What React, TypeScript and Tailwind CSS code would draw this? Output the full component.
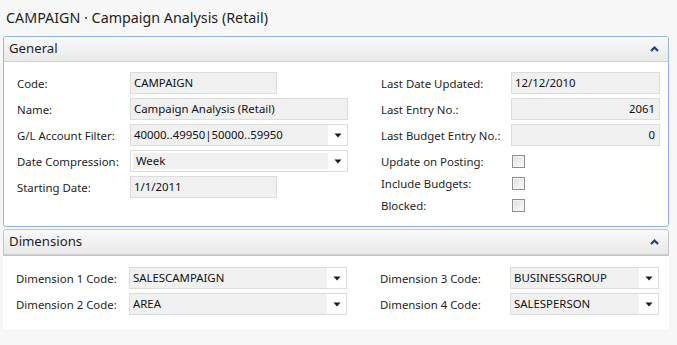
import React from 'react';

const ChevronUp = () => (
  <svg width="9" height="6" viewBox="0 0 9 6" className="block">
    <path d="M1 5 L4.5 1.5 L8 5" fill="none" stroke="#1f3f8f" strokeWidth="2.2" />
  </svg>
);

const ArrowDown = () => (
  <svg width="8" height="5" viewBox="0 0 8 5" className="block">
    <path d="M0.5 0.5 H7.5 L4 4.5 Z" fill="#1a1a1a" />
  </svg>
);

const TextBox = ({ value, width, right }: { value: string; width: string; right?: boolean }) => (
  <div
    className={`h-[22px] ${width} border border-[#dcdcdc] bg-[#f0f0f0] flex items-center px-[3px] ${
      right ? 'justify-end pr-[4px]' : ''
    }`}
  >
    <span className="text-[11.4px] text-[#111] leading-none">{value}</span>
  </div>
);

const DropBox = ({ value, width, inset }: { value: string; width: string; inset?: boolean }) => (
  <div className={`h-[22px] ${width} border border-[#dcdcdc] bg-white flex`}>
    <div className={`flex-1 flex items-center px-[3px] bg-[#f0f0f0] ${inset ? 'my-[2px] ml-[2px]' : ''}`}>
      <span className="text-[11.4px] text-[#111] leading-none">{value}</span>
    </div>
    <div className="w-[19px] flex items-center justify-center">
      <ArrowDown />
    </div>
  </div>
);

const CheckBox = () => (
  <div className="w-[13px] h-[13px] border border-[#8f8f8f] bg-[#f3f3f3] p-[1px]">
    <div className="w-full h-full bg-gradient-to-br from-[#e2e2e2] to-[#f8f8f8]" />
  </div>
);

const Row = ({ label, labelW, children }: { label: string; labelW: string; children: React.ReactNode }) => (
  <div className="flex items-center h-[22px]">
    <div className={`${labelW} text-[11.4px] text-[#1e1e1e] leading-none pt-[1px]`}>{label}</div>
    {children}
  </div>
);

const PanelHeader = ({ title }: { title: string }) => (
  <div className="h-[25px] flex items-center justify-between pl-[5px] pr-[9px] bg-gradient-to-b from-[#f9f9f9] to-[#e9e9e9] border-b border-[#d0d0d0]">
    <span className="text-[13.2px] text-[#1e1e1e]">{title}</span>
    <ChevronUp />
  </div>
);

export default function App() {
  return (
    <div
      className="w-[677px] h-[345px] bg-[#f7f7f7] overflow-hidden"
      style={{ fontFamily: '"Noto Sans", "Open Sans", sans-serif' }}
    >
      <div className="h-[36px] pl-[6px] flex items-center pb-[1px]">
        <span className="text-[14.3px] text-[#1e1e1e]">CAMPAIGN · Campaign Analysis (Retail)</span>
      </div>

      {/* General */}
      <div className="ml-[3px] w-[666px] h-[191px] border border-[#93b5ee] rounded-[3px] bg-white overflow-hidden">
        <PanelHeader title="General" />
        <div className="flex pt-[10px] pl-[13px]">
          <div className="w-[364px] flex flex-col gap-[4px]">
            <Row label="Code:" labelW="w-[113px]">
              <TextBox value="CAMPAIGN" width="w-[147px]" />
            </Row>
            <Row label="Name:" labelW="w-[113px]">
              <TextBox value="Campaign Analysis (Retail)" width="w-[218px]" />
            </Row>
            <Row label="G/L Account Filter:" labelW="w-[113px]">
              <DropBox value="40000..49950|50000..59950" width="w-[218px]" />
            </Row>
            <Row label="Date Compression:" labelW="w-[113px]">
              <DropBox value="Week" width="w-[218px]" inset />
            </Row>
            <Row label="Starting Date:" labelW="w-[113px]">
              <TextBox value="1/1/2011" width="w-[147px]" />
            </Row>
          </div>
          <div className="flex flex-col gap-[4px]">
            <Row label="Last Date Updated:" labelW="w-[130px]">
              <TextBox value="12/12/2010" width="w-[149px]" />
            </Row>
            <Row label="Last Entry No.:" labelW="w-[130px]">
              <TextBox value="2061" width="w-[149px]" right />
            </Row>
            <Row label="Last Budget Entry No.:" labelW="w-[130px]">
              <TextBox value="0" width="w-[149px]" right />
            </Row>
            <div className="flex flex-col">
              <Row label="Update on Posting:" labelW="w-[131px]">
                <CheckBox />
              </Row>
              <Row label="Include Budgets:" labelW="w-[131px]">
                <CheckBox />
              </Row>
              <Row label="Blocked:" labelW="w-[131px]">
                <CheckBox />
              </Row>
            </div>
          </div>
        </div>
      </div>

      {/* Dimensions */}
      <div className="ml-[3px] mt-[2px] w-[666px]">
        <div className="border border-[#c4c4c4] rounded-t-[3px] overflow-hidden">
          <PanelHeader title="Dimensions" />
        </div>
        <div className="bg-white h-[73px] flex pt-[11px] pl-[13px]">
          <div className="w-[364px] flex flex-col gap-[4px]">
            <Row label="Dimension 1 Code:" labelW="w-[113px]">
              <DropBox value="SALESCAMPAIGN" width="w-[218px]" />
            </Row>
            <Row label="Dimension 2 Code:" labelW="w-[113px]">
              <DropBox value="AREA" width="w-[218px]" />
            </Row>
          </div>
          <div className="flex flex-col gap-[4px]">
            <Row label="Dimension 3 Code:" labelW="w-[130px]">
              <DropBox value="BUSINESSGROUP" width="w-[149px]" />
            </Row>
            <Row label="Dimension 4 Code:" labelW="w-[130px]">
              <DropBox value="SALESPERSON" width="w-[149px]" />
            </Row>
          </div>
        </div>
      </div>
    </div>
  );
}
